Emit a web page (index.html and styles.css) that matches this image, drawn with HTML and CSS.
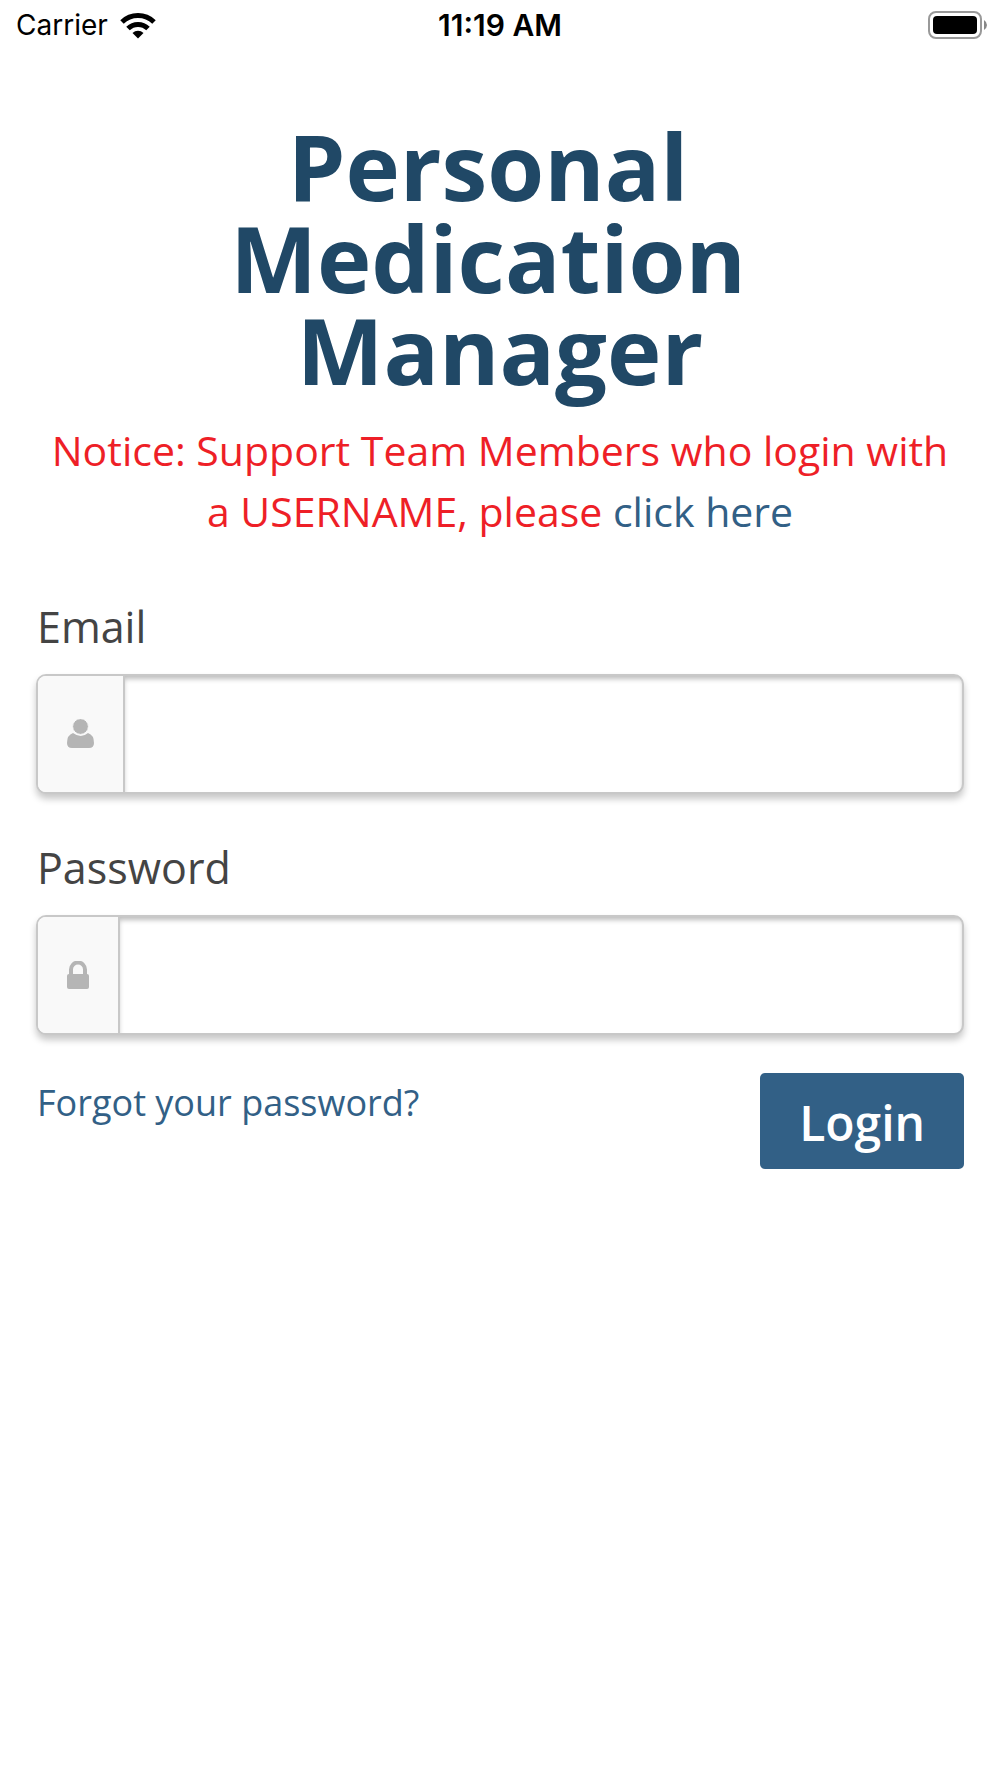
FILE: index.html
```html
<!DOCTYPE html>
<html lang="en">
<head>
<meta charset="utf-8">
<meta name="viewport" content="width=device-width, initial-scale=1">
<title>Personal Medication Manager</title>
<link rel="stylesheet" href="styles.css">
</head>
<body>
<header class="status-bar">
  <div class="carrier">
    <span>Carrier</span>
    <svg class="wifi" viewBox="0 0 36 27" width="36" height="27" aria-hidden="true">
      <g fill="none" stroke="#000" stroke-width="5">
        <path d="M2 10 A23 23 0 0 1 34 10"/>
        <path d="M8 16.5 A14.3 14.3 0 0 1 28 16.5"/>
      </g>
      <path d="M12.5 21 A8 8 0 0 1 23.5 21 L18 26.5 Z"/>
    </svg>
  </div>
  <time class="clock">11:19 AM</time>
  <svg class="battery" viewBox="0 0 60 28" width="60" height="28" role="img" aria-label="Battery full">
    <rect x="1" y="1" width="52" height="26" rx="7" fill="#fff" stroke="#999" stroke-width="2"/>
    <rect x="5" y="5" width="44" height="18" rx="4"/>
    <path d="M56 9 Q59 11 59 14 Q59 17 56 19 Z" fill="#888"/>
  </svg>
</header>
<main class="login">
  <h1 class="title">Personal&nbsp;<br>Medication&nbsp;<br>Manager</h1>
  <p class="notice">Notice: Support Team Members who login with a USERNAME, please <a href="#username">click here</a></p>
  <form class="form">
    <div class="field">
      <label for="email">Email</label>
      <div class="input-group">
        <span class="addon">
          <svg viewBox="0 0 27 30" width="27" height="30" aria-hidden="true">
            <path d="M6 14 Q14 20 21 14 Q27 16 27 24 Q27 29 22 29 H5 Q0 29 0 24 Q0 16 6 14 Z"/>
            <circle cx="13.5" cy="7.5" r="7.9" stroke="#f9f9f9" stroke-width="1"/>
          </svg>
        </span>
        <input type="email" id="email" name="email">
      </div>
    </div>
    <div class="field">
      <label for="password">Password</label>
      <div class="input-group">
        <span class="addon">
          <svg viewBox="0 0 22 28" width="22" height="28" aria-hidden="true">
            <path d="M4 14 V8.5 A7 7 0 0 1 18 8.5 V14" fill="none" stroke="#b5b5b5" stroke-width="4"/>
            <rect x="0" y="13" width="22" height="15" rx="2"/>
          </svg>
        </span>
        <input type="password" id="password" name="password">
      </div>
    </div>
    <div class="actions">
      <a class="forgot" href="#forgot">Forgot your password?</a>
      <button class="submit" type="submit">Login</button>
    </div>
  </form>
</main>
</body>
</html>
```
FILE: styles.css
```css
* {
  box-sizing: border-box;
}

body {
  margin: 0;
  background: #fff;
  color: #444;
  font-family: "Open Sans", sans-serif;
}

a {
  color: #326086;
  text-decoration: none;
}

.status-bar {
  display: grid;
  grid-template-columns: 1fr auto 1fr;
  align-items: center;
  height: 50px;
  padding: 0 12px;
  color: #000;
  font-family: Inter, sans-serif;
  font-size: 28px;
  line-height: 36px;
}

.carrier {
  display: flex;
  align-items: center;
  gap: 12px;
  padding-left: 4px;
}

.clock {
  font-size: 30px;
  font-weight: 600;
}

.battery {
  justify-self: end;
}

.login {
  padding: 70px 36px 0;
}

.title {
  margin: 0 0 24px;
  color: #204866;
  font-size: 92px;
  font-weight: 700;
  line-height: 92px;
  text-align: center;
}

.notice {
  margin: 0 0 55px;
  color: #ee1f27;
  font-size: 41px;
  line-height: 61px;
  text-align: center;
}

.form {
  display: flex;
  flex-direction: column;
}

.field {
  display: flex;
  flex-direction: column;
  gap: 17px;
  margin-bottom: 44px;
}

.field label {
  align-self: flex-start;
  padding-left: 1px;
  font-size: 43px;
  line-height: 60px;
}

.input-group {
  display: flex;
  height: 120px;
  border: 2px solid #c8c8c8;
  border-radius: 10px;
  background: #fff;
  box-shadow: 0 5px 7px rgba(0, 0, 0, 0.22);
  overflow: hidden;
}

.addon {
  display: flex;
  align-items: center;
  padding: 0 29px;
  border-right: 2px solid #c8c8c8;
  background: #f9f9f9;
}

.addon svg {
  fill: #b5b5b5;
}

.input-group input {
  flex: 1;
  min-width: 0;
  padding: 0 24px;
  border: 0;
  background: transparent;
  box-shadow: inset 0 4px 5px -1px rgba(0, 0, 0, 0.26);
  color: inherit;
  font: inherit;
  font-size: 41px;
}

.actions {
  display: flex;
  justify-content: space-between;
  align-items: flex-start;
  margin-top: -6px;
}

.forgot {
  padding: 4px 0 0 1px;
  font-size: 36px;
  line-height: 52px;
}

.submit {
  padding: 17px 39px 14px;
  border: 0;
  border-radius: 5px;
  background: #326086;
  color: #fff;
  font: 600 48px/65px "Open Sans", sans-serif;
}
```
